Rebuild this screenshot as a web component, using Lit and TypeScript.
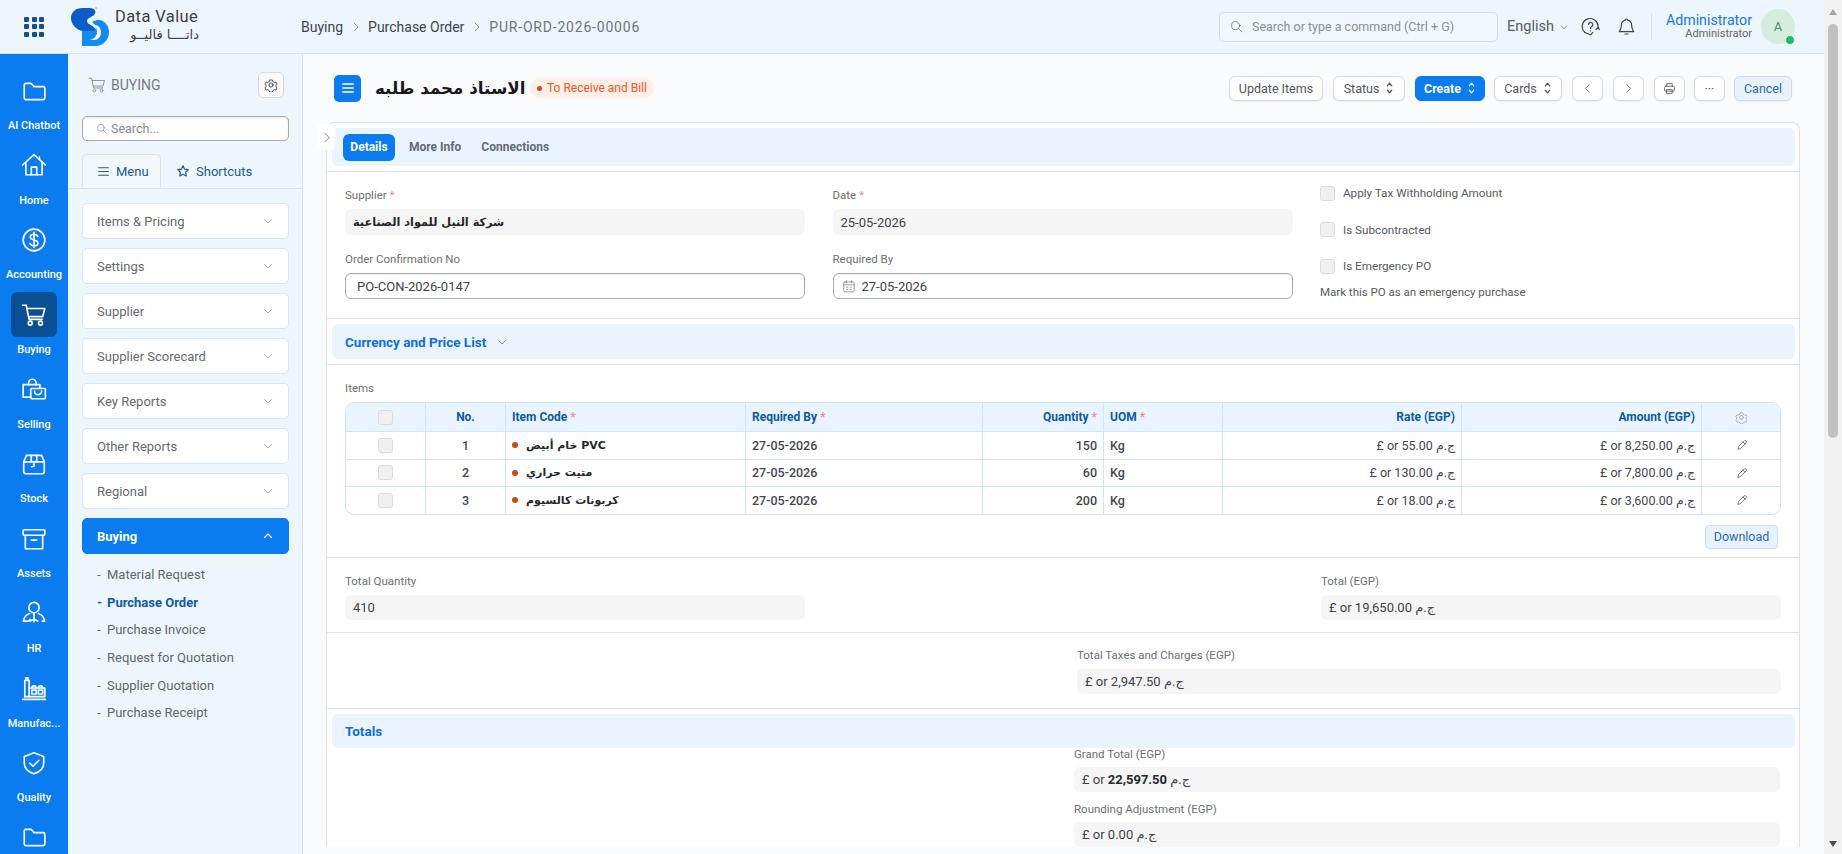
import { LitElement, html, css, svg } from 'lit';
import { customElement } from 'lit/decorators.js';

const railIcons: Record<string, unknown> = {
  folder: svg`<path d="M3 6.5A1.5 1.5 0 0 1 4.5 5h5l2.500 3h8.500A1.500 1.500 0 0 1 22 9.500v9a1.500 1.500 0 0 1-1.500 1.500h-16A1.500 1.500 0 0 1 3 18.500z"/>`,
  home: svg`<path d="M1.500 12 12 2.500 22.500 12"/><path d="M4.500 10v11h15V10"/><path d="M9.500 21v-7h5v7"/><path d="M17 4.500V7"/>`,
  dollar: svg`<circle cx="12" cy="12" r="10"/><path d="M15.500 8.700c-.6-1.300-1.900-2-3.500-2-2 0-3.500 1-3.500 2.600 0 3.600 7.200 1.800 7.200 5.400 0 1.600-1.600 2.600-3.700 2.600-1.700 0-3.100-.8-3.700-2.100"/><path d="M12 4.800v14.400"/>`,
  cart: svg`<path d="M1.500 3h3.300l2.700 13h12"/><path d="M5.400 6h16.600l-2 7.500H7"/><circle cx="8.500" cy="19.500" r="1.800"/><circle cx="18" cy="19.500" r="1.800"/>`,
  selling: svg`<path d="M7 8V6.500a3.500 3.500 0 0 1 7 0V8"/><path d="M9 19.500H2V8h15.500v3.500"/><rect x="9" y="11.500" width="13.500" height="9.500" rx="1"/><path d="M12.500 14a3.200 3.200 0 0 0 6.500 0"/>`,
  stock: svg`<path d="M2.500 10 5 4h14l2.500 6v9a2 2 0 0 1-2 2h-15a2 2 0 0 1-2-2z"/><path d="M2.500 10h19"/><path d="M9.500 4v6M14.500 4v6"/><path d="M12 10v4l-2 .5"/>`,
  assets: svg`<rect x="2" y="3.500" width="20" height="5" rx=".8"/><path d="M4 8.500V21h16V8.500"/><path d="M9.500 13h5"/>`,
  hr: svg`<circle cx="12" cy="7" r="4.800"/><path d="M8 12.500c-3 1-5.200 3.500-5.800 7h4.300c1 0 1.500-.8 2-1.700"/><path d="M16 12.500c3 1 5.200 3.500 5.800 7h-2.300"/><path d="M12 12v8"/><path d="M8.500 19.500c2-1.500 5-1.500 7 0"/>`,
  factory: svg`<path d="M1.500 22.500h21"/><path d="M3.500 20V5h4v15"/><path d="M4.500 5V2.500h2V5"/><path d="M7.500 12h14.500v8H3.500"/><rect x="10" y="14" width="4" height="3.500"/><rect x="16" y="14" width="4" height="3.500"/><path d="M10 12a2 2 0 0 1 4 0M16 12a2 2 0 0 1 4 0"/>`,
  quality: svg`<path d="M12 2.500 21 6v6c0 5-3.800 8.300-9 10-5.200-1.700-9-5-9-10V6z"/><path d="m8 12 3 3 5.500-5.500"/>`,
};

const rail = [
  { label: 'AI Chatbot', icon: 'folder' },
  { label: 'Home', icon: 'home' },
  { label: 'Accounting', icon: 'dollar' },
  { label: 'Buying', icon: 'cart', active: true },
  { label: 'Selling', icon: 'selling' },
  { label: 'Stock', icon: 'stock' },
  { label: 'Assets', icon: 'assets' },
  { label: 'HR', icon: 'hr' },
  { label: 'Manufac...', icon: 'factory' },
  { label: 'Quality', icon: 'quality' },
  { label: '', icon: 'folder' },
];

const accordions = ['Items & Pricing', 'Settings', 'Supplier', 'Supplier Scorecard', 'Key Reports', 'Other Reports', 'Regional'];
const subItems = ['Material Request', 'Purchase Order', 'Purchase Invoice', 'Request for Quotation', 'Supplier Quotation', 'Purchase Receipt'];
const rows = [
  { no: 1, code: 'خام أبيض PVC', qty: 150, rate: '55.00', amount: '8,250.00' },
  { no: 2, code: 'متيت حراري', qty: 60, rate: '130.00', amount: '7,800.00' },
  { no: 3, code: 'كربونات كالسيوم', qty: 200, rate: '18.00', amount: '3,600.00' },
];

const chevronDown = html`<svg class="chev" viewBox="0 0 24 24"><path d="m5 9 7 7 7-7"/></svg>`;
const updown = html`<svg class="updown" viewBox="0 0 10 16"><path d="m2.500 5.500 2.500-3 2.500 3M2.500 10.500l2.500 3 2.500-3"/></svg>`;
const gear = html`<svg class="gear" viewBox="0 0 24 24"><path d="M9.500 2.500h5l1 3 2.800 1.600 3-.7 2.200 4-2 2.100v3l2 2.100-2.200 4-3-.7-2.800 1.600-1 3h-5l-1-3-2.800-1.600-3 .7-2.200-4 2-2.100v-3l-2-2.100 2.200-4 3 .7 2.800-1.600z" transform="translate(1.200 1.200) scale(.9)"/><circle cx="12" cy="12" r="3.500"/></svg>`;
const searchIcon = html`<svg class="search-icon" viewBox="0 0 24 24"><circle cx="10.500" cy="10.500" r="7.500"/><path d="m16 16 6 6"/></svg>`;

@customElement('app-root')
export class AppRoot extends LitElement {
  static styles = css`
    :host {
      display: flex;
      width: 1842px;
      height: 854px;
      overflow: hidden;
      font-family: Roboto, "DejaVu Sans", sans-serif;
      font-size: 13px;
      color: #3a3f45;
      background: #fafbfd;
    }
    svg { fill: none; stroke: currentColor; stroke-width: 1.5; stroke-linecap: round; stroke-linejoin: round; display: block; flex: none; }
    .page { width: 1824px; height: 854px; display: flex; flex-direction: column; flex: none; }

    /* top bar */
    .topbar {
      height: 54px; box-sizing: border-box; flex: none; display: flex; align-items: center;
      background: #edf5fd; border-bottom: 1px solid #cfe3f8;
    }
    .apps { width: 20px; height: 20px; margin-left: 24px; display: grid; grid-template-columns: repeat(3, 5px); gap: 2.500px; }
    .apps i { background: #17508a; border-radius: 1px; }
    .logo { width: 38px; height: 40px; margin-left: 27px; stroke: none; }
    .brand { margin-left: 6px; width: 170px; color: #3c4149; line-height: 1; }
    .brand b { display: block; font-weight: 400; font-size: 16.500px; letter-spacing: .4px; height: 19px; }
    .brand span { display: block; font-size: 13px; font-family: "DejaVu Sans", sans-serif; height: 16px; width: 84px; direction: rtl; text-align: right; white-space: nowrap; }
    .crumbs { display: flex; align-items: center; font-size: 14px; color: #3f4650; margin-left: 16px; }
    .crumbs svg { width: 12px; height: 12px; margin: 0 6px 0 7px; color: #777; }
    .crumbs .doc { color: #70757c; letter-spacing: .8px; }
    .top-right { margin-left: auto; display: flex; align-items: center; padding-right: 29px; }
    .cmd {
      width: 279px; height: 30px; box-sizing: border-box; border: 1px solid #c9dff6; border-radius: 5px;
      display: flex; align-items: center; color: #8a8f96; font-size: 12.500px; background: #f1f7fd;
    }
    .cmd svg { width: 13px; height: 13px; margin: 0 9px 0 10px; color: #777; }
    .lang { margin-left: 9px; font-size: 14.500px; color: #555b63; display: flex; align-items: center; width: 74px; }
    .lang .chev { width: 10px; height: 10px; margin-left: 5px; }
    .ico { width: 19px; height: 19px; color: #444; }
    .bell { margin-left: 17px; }
    .divider { width: 1px; height: 27px; background: #d8e3ee; margin: 0 10px 0 15px; }
    .user { text-align: right; width: 90px; line-height: 13px; }
    .user b { display: block; font-weight: 400; color: #1878e6; font-size: 14.200px; }
    .user span { display: block; font-size: 11px; color: #666; }
    .avatar {
      width: 34px; height: 35px; border-radius: 50%; background: #d6ecdc; color: #4d8f63; margin-left: 9px;
      display: flex; align-items: center; justify-content: center; font-size: 13px; position: relative;
    }
    .avatar::after {
      content: ""; position: absolute; right: 0; bottom: -1px; width: 8px; height: 8px; border-radius: 50%;
      background: #1fb968; border: 1px solid #edf5fd;
    }

    .body { flex: 1; display: flex; min-height: 0; }

    /* rail */
    .rail { width: 68px; flex: none; background: #0a7cf0; padding-top: 14px; box-sizing: border-box; overflow: hidden; color: #fff; }
    .rail-item { height: 74.700px; display: flex; flex-direction: column; align-items: center; }
    .rail-icon { width: 46px; height: 45px; border-radius: 6px; display: flex; align-items: center; justify-content: center; }
    .rail-item.active .rail-icon { background: #0a4f95; }
    .rail-icon svg { width: 26px; height: 26px; }
    .rail-item span { font-size: 11px; font-weight: 500; margin-top: 6px; line-height: 14px; white-space: nowrap; }

    /* sidebar */
    .side {
      width: 235px; flex: none; box-sizing: border-box; background: #eef6fd;
      border-right: 1px solid #cfe3f8; display: flex; flex-direction: column; padding-top: 19px;
    }
    .side-head { display: flex; align-items: center; padding: 0 18px 0 20px; height: 24px; color: #777b80; font-size: 14px; }
    .side-head > svg { width: 18px; height: 18px; margin-right: 5px; color: #8a8d92; stroke-width: 1.200; }
    .gear-btn {
      margin-left: auto; width: 24px; height: 24px; border: 1px solid #d9d9d9; border-radius: 5px; background: #fafafa;
      display: flex; align-items: center; justify-content: center; color: #333;
    }
    .gear { width: 14px; height: 14px; }
    .side-search {
      margin: 19px 13px 0 14px; height: 25px; box-sizing: border-box; background: #fff; border: 1px solid #aaa; border-radius: 5px;
      display: flex; align-items: center; color: #8b8b8b; font-size: 12.500px; box-shadow: inset 0 1px 2px rgba(0,0,0,.1);
    }
    .side-search svg { width: 11px; height: 11px; margin: 0 4px 0 13px; color: #888; }
    .side-tabs { margin-top: 13px; height: 34px; border-bottom: 1px solid #dde3e8; display: flex; padding-left: 14px; }
    .side-tab {
      height: 34px; box-sizing: border-box; display: flex; align-items: center; color: #22598f; font-size: 13px;
      padding-left: 14px; width: 79px;
    }
    .side-tab.on { background: #f2f7fc; border: 1px solid #dde3e8; border-bottom: 1px solid #f2f7fc; border-radius: 5px 5px 0 0; }
    .side-tab svg { width: 13px; height: 13px; margin-right: 6px; }
    .side-tab + .side-tab { margin-left: 15px; padding-left: 0; width: 90px; }
    .side-tab + .side-tab svg { width: 14px; height: 14px; }
    .accs { margin: 14px 13px 0 14px; display: flex; flex-direction: column; gap: 9px; }
    .acc {
      height: 36px; box-sizing: border-box; background: #fff; border: 1px solid #d5e7fa; border-radius: 5px;
      display: flex; align-items: center; justify-content: space-between; padding: 0 14px; color: #666a6f; font-size: 13px;
    }
    .acc .chev { width: 12px; height: 12px; color: #85898e; }
    .acc.open { background: #0a7cf0; border-color: #0a7cf0; color: #fff; font-weight: 700; }
    .acc.open .chev { color: #fff; stroke-width: 2.500; transform: scaleY(-1); }
    .subs { margin: 7px 0 0 29px; display: flex; flex-direction: column; }
    .sub { height: 27.600px; display: flex; align-items: center; color: #62666b; font-size: 13px; }
    .sub i { font-style: normal; width: 10px; }
    .sub.on { color: #0f5aa6; font-weight: 700; }

    /* main */
    .main { flex: 1; min-width: 0; background: #fafbfd; overflow: hidden; }
    .head { height: 68px; box-sizing: border-box; display: flex; align-items: center; padding: 0 32px 0 31px; }
    .menu-btn { width: 27px; height: 27px; border-radius: 5px; background: #0a7cf0; color: #fff; display: flex; align-items: center; justify-content: center; }
    .menu-btn svg { width: 16px; height: 16px; stroke-width: 2; }
    .title { font-family: "DejaVu Sans", sans-serif; font-weight: 700; font-size: 16.700px; margin-left: 14px; width: 148px; white-space: nowrap; color: #16181b; text-align: center; }
    .pill {
      margin-left: 7px; height: 20px; padding: 0 7px; border-radius: 10px; background: #fdeee6; color: #e2592f; font-size: 12px;
      display: flex; align-items: center;
    }
    .pill i { width: 5px; height: 5px; background: #d6481c; border-radius: 50%; margin-right: 5px; }
    .actions { margin-left: auto; display: flex; }
    .btn {
      height: 25px; box-sizing: border-box; border: 1px solid #d8dadd; border-radius: 6px; background: #fff; color: #50555c;
      font-size: 12.500px; display: flex; align-items: center; justify-content: center; gap: 6px; margin-left: 10px;
      box-shadow: 0 1px 2px rgba(0,0,0,.05);
    }
    .btn .updown { width: 9px; height: 14px; }
    .btn.primary { background: #0a7cf0; border-color: #0a7cf0; color: #fff; font-weight: 700; }
    .btn.cancel { background: #e7f2fd; border-color: #d0dbe6; color: #2a6caf; }
    .btn.square { width: 31px; }
    .btn.square svg { width: 13px; height: 13px; }
    .btn.tight { margin-left: 9px; }

    .card {
      margin: 0 24px 0 23px; background: #fff; border: 1px solid #dfe1e4; border-bottom: 0; border-radius: 8px 8px 0 0;
      position: relative; padding-top: 5px;
    }
    .handle {
      position: absolute; left: -10px; top: 1px; width: 18px; height: 26px; background: #fff; border-radius: 4px;
      display: flex; align-items: center; justify-content: center; color: #666;
    }
    .handle svg { width: 13px; height: 13px; }
    .strip { margin: 0 4px 0 5px; background: #eaf4fe; border-radius: 6px; }
    .tabs { height: 38px; display: flex; align-items: center; padding-left: 11px; }
    .tab { font-size: 12px; font-weight: 700; color: #656b74; padding: 0 10px; height: 27px; display: flex; align-items: center; }
    .tab.on { background: #0a7cf0; color: #fff; border-radius: 6px; padding: 0; width: 52px; justify-content: center; margin-right: 4px; }
    .sec { border-top: 1px solid #e1e3e6; margin-top: 5px; padding: 0 18px; }
    .strip.fold { height: 35px; margin-top: 5px; display: flex; align-items: center; padding-left: 13px; color: #0f6fdc; font-weight: 700; font-size: 13.500px; }
    .strip.fold .chev { width: 12px; height: 12px; margin-left: 10px; color: #667; }
    .rule { border-top: 1px solid #e1e3e6; }

    .top-grid { display: grid; grid-template-columns: repeat(3, 460px); column-gap: 27.500px; padding-top: 16px; height: 130px; }
    .col { display: flex; flex-direction: column; gap: 17px; }
    .field label, .lbl { display: block; height: 14px; line-height: 14px; font-size: 11.500px; color: #6b7075; margin-bottom: 7px; }
    .field label em { color: #ec8a8d; font-style: normal; }
    .val {
      height: 26px; box-sizing: border-box; background: #f5f5f6; border-radius: 6px; display: flex; align-items: center;
      padding: 0 8px; font-size: 13px; color: #3e4349;
    }
    .val.ar { font-family: "DejaVu Sans", sans-serif; font-weight: 700; font-size: 11.300px; color: #25282c; }
    .val.edit { background: #fff; border: 1px solid #a9adb2; padding: 0 11px; box-shadow: inset 0 1px 1px rgba(0,0,0,.06); }
    .val.edit.date { padding-left: 8px; }
    .val.edit svg { width: 14px; height: 14px; margin-right: 6px; color: #777; stroke-width: 1.200; }
    .val b { font-weight: 700; color: #25282c; }
    .checks { display: flex; flex-direction: column; margin-top: -13px; }
    .check { display: flex; align-items: center; height: 36.500px; font-size: 11.700px; color: #555a60; }
    .box { width: 15px; height: 15px; box-sizing: border-box; background: #f0f0f1; border: 1px solid #dcdcdd; border-radius: 3px; flex: none; }
    .check .box { margin-right: 8px; }
    .hint { font-size: 11.500px; color: #565b61; line-height: 14px; }

    .items { padding-top: 16px; height: 193px; box-sizing: border-box; }
    .items .lbl { margin-bottom: 7px; }
    .table { border: 1px solid #cfe5fb; border-radius: 9px; overflow: hidden; width: 1436px; box-sizing: border-box; }
    .tr { display: grid; grid-template-columns: 80px 80px 240px 237px 121px 119px 239px 240px 79px; height: 27.500px; border-top: 1px solid #cfe5fb; box-sizing: border-box; align-items: stretch; }
    .tr.th { background: #eaf4fe; border-top: 0; height: 28px; }
    .tr > div { border-right: 1px solid #cfe5fb; display: flex; align-items: center; padding: 0 6px; min-width: 0; white-space: nowrap; font-size: 12.500px; font-weight: 500; color: #43484e; }
    .tr.th > div { color: #0b5aa5; font-size: 12px; font-weight: 700; }
    .tr > div:last-child { border-right: 0; }
    .tr em { color: #ef8d90; font-style: normal; margin-left: 3px; }
    .tr > .c { justify-content: center; }
    .tr > .r { justify-content: flex-end; }
    .tr > .money { font-weight: 400; }
    .tr > .code { font-family: "DejaVu Sans", sans-serif; font-weight: 700; font-size: 11px; color: #25282c; }
    .code i { width: 6px; height: 6px; border-radius: 50%; background: #cc4a12; margin-right: 8px; flex: none; }
    .tr .pencil { width: 12px; height: 12px; color: #555; }
    .tr .gear { width: 13px; height: 13px; color: #999; }
    .dl { display: flex; justify-content: flex-end; margin-top: 10px; padding-right: 3px; }
    .dl div {
      width: 73px; height: 24px; box-sizing: border-box; background: #e7f2fd; border: 1px solid #c6e0fa; border-radius: 4px;
      display: flex; align-items: center; justify-content: center; font-size: 12.500px; color: #2a6caf;
    }
    .two { display: grid; grid-template-columns: 460px 460px 460px; column-gap: 28px; padding-top: 16px; height: 75px; box-sizing: border-box; margin-top: 0; }
    .half { display: grid; grid-template-columns: 704px 704px; column-gap: 28px; padding-top: 15px; height: 76px; box-sizing: border-box; margin-top: 0; }
    .half .val, .two .val, .after .val { height: 25px; }
    .after { margin: -1px 0 0 729px; width: 706px; }
    .after label { margin-bottom: 6px; }
    .after .field + .field { margin-top: 10px; }
    .scroll { width: 18px; flex: none; background: #f1f1f1; position: relative; }
    .thumb { position: absolute; left: 4px; top: 24px; width: 10px; height: 414px; background: #c1c1c1; border-radius: 5px; }
    .scroll i { position: absolute; left: 5px; width: 0; height: 0; border-left: 4px solid transparent; border-right: 4px solid transparent; }
    .scroll .up { top: 9px; border-bottom: 6px solid #a3a3a3; }
    .scroll .down { bottom: 7px; border-top: 6px solid #505050; }
  `;

  private _field(label: string, value: unknown, req = false, cls = '') {
    return html`<div class="field"><label>${label}${req ? html` <em>*</em>` : ''}</label><div class="val ${cls}">${value}</div></div>`;
  }

  private _money(v: string, bold = false) {
    return html`<span>£ or ${bold ? html`<b>${v}</b>` : v} ج.م</span>`;
  }

  render() {
    return html`
      <div class="page">
        <header class="topbar">
          <div class="apps">${Array.from({ length: 9 }, () => html`<i></i>`)}</div>
          <svg class="logo" viewBox="0 0 38 40">
            <path fill="#0a5cc8" d="M0 11C0 5 5 1 11 1h8c5 0 7 4 4 7-2 2-7 3-7 6 0 4 8 4 9 10H12C5 23 0 17 0 11z"/>
            <path fill="#148af5" d="M11 24h8c3 0 6-1 6-4 0-2-2-3-4-5 2-1 4-2 6-2 7 0 11 6 11 12 0 8-6 14-14 14H11z"/>
            <path fill="#fff" d="M24 18c3 0 6 3 6 7 0 5-3 8-7 8h-4c4-1 7-4 7-8 0-3-1-5-2-7z"/>
            <circle cx="25" cy="1" r=".8" fill="#5ab2fa"/>
          </svg>
          <div class="brand"><b>Data Value</b><span>داتــــا فاليــو</span></div>
          <nav class="crumbs">
            <span>Buying</span><svg viewBox="0 0 24 24"><path d="m8 4 8 8-8 8"/></svg>
            <span>Purchase Order</span><svg viewBox="0 0 24 24"><path d="m8 4 8 8-8 8"/></svg>
            <span class="doc">PUR-ORD-2026-00006</span>
          </nav>
          <div class="top-right">
            <div class="cmd">${searchIcon}Search or type a command (Ctrl + G)</div>
            <div class="lang">English ${chevronDown}</div>
            <svg class="ico" viewBox="0 0 24 24"><path d="M5 19.500A10 10 0 1 1 21.500 13"/><path d="M9.500 9.500a2.700 2.700 0 1 1 4 2.400c-1 .6-1.500 1.200-1.500 2.600"/><path d="M12 17.500v.2"/><path d="m5 19.500 7 3 3-3"/><path d="m19 16 3-3 1 3"/></svg>
            <svg class="ico bell" viewBox="0 0 24 24"><path d="M12 2.500a1.500 1.500 0 0 0-1.500 1.500 6.500 6.500 0 0 0-5 6.500c0 5-2 6.500-2.500 8h18c-.5-1.500-2.500-3-2.500-8a6.500 6.500 0 0 0-5-6.500A1.500 1.500 0 0 0 12 2.500z"/><path d="M10 21.500h4"/></svg>
            <div class="divider"></div>
            <div class="user"><b>Administrator</b><span>Administrator</span></div>
            <div class="avatar">A</div>
          </div>
        </header>
        <div class="body">
          <aside class="rail">
            ${rail.map(r => html`
              <div class="rail-item ${r.active ? 'active' : ''}">
                <div class="rail-icon"><svg viewBox="0 0 24 24">${railIcons[r.icon]}</svg></div>
                <span>${r.label}</span>
              </div>`)}
          </aside>
          <aside class="side">
            <div class="side-head">
              <svg viewBox="0 0 24 24">${railIcons.cart}</svg>BUYING
              <div class="gear-btn">${gear}</div>
            </div>
            <div class="side-search">${searchIcon}Search...</div>
            <div class="side-tabs">
              <div class="side-tab on"><svg viewBox="0 0 24 24" style="stroke-width:2"><path d="M3 5h18M3 12h18M3 19h18"/></svg>Menu</div>
              <div class="side-tab"><svg viewBox="0 0 24 24" style="stroke-width:2"><path d="m12 3 2.800 5.800 6.200.9-4.500 4.400 1.100 6.300-5.600-3-5.600 3 1.100-6.300L3 9.700l6.200-.9z"/></svg>Shortcuts</div>
            </div>
            <div class="accs">
              ${accordions.map(a => html`<div class="acc">${a}${chevronDown}</div>`)}
              <div class="acc open">Buying${chevronDown}</div>
            </div>
            <div class="subs">
              ${subItems.map(s => html`<div class="sub ${s === 'Purchase Order' ? 'on' : ''}"><i>-</i>${s}</div>`)}
            </div>
          </aside>
          <main class="main">
            <div class="head">
              <div class="menu-btn"><svg viewBox="0 0 24 24"><path d="M4 6h16M4 12h16M4 18h16"/></svg></div>
              <div class="title">الاستاذ محمد طلبه</div>
              <div class="pill"><i></i>To Receive and Bill</div>
              <div class="actions">
                <div class="btn" style="width:94px">Update Items</div>
                <div class="btn" style="width:72px">Status ${updown}</div>
                <div class="btn primary" style="width:70px">Create ${updown}</div>
                <div class="btn tight" style="width:68px">Cards ${updown}</div>
                <div class="btn square"><svg viewBox="0 0 24 24"><path d="m15 5-7 7 7 7"/></svg></div>
                <div class="btn square"><svg viewBox="0 0 24 24"><path d="m9 5 7 7-7 7"/></svg></div>
                <div class="btn square"><svg viewBox="0 0 24 24"><path d="M7 8V3h10v5"/><rect x="3" y="8" width="18" height="9" rx="2"/><path d="M7 14h10v7H7z"/></svg></div>
                <div class="btn square tight">···</div>
                <div class="btn cancel tight" style="width:58px">Cancel</div>
              </div>
            </div>
            <section class="card">
              <div class="handle"><svg viewBox="0 0 24 24"><path d="m9 4 8 8-8 8"/></svg></div>
              <div class="strip tabs">
                <div class="tab on">Details</div><div class="tab">More Info</div><div class="tab">Connections</div>
              </div>
              <div class="sec">
                <div class="top-grid">
                  <div class="col">
                    ${this._field('Supplier', 'شركة النيل للمواد الصناعية', true, 'ar')}
                    ${this._field('Order Confirmation No', 'PO-CON-2026-0147', false, 'edit')}
                  </div>
                  <div class="col">
                    ${this._field('Date', '25-05-2026', true)}
                    ${this._field('Required By', html`<svg viewBox="0 0 24 24"><rect x="3" y="5" width="18" height="17" rx="2"/><path d="M3 10h18M8 2.500V7M16 2.500V7M8 14h2M14 14h2M8 18h2M14 18h2"/></svg>27-05-2026`, false, 'edit date')}
                  </div>
                  <div class="checks">
                    <div class="check"><span class="box"></span>Apply Tax Withholding Amount</div>
                    <div class="check"><span class="box"></span>Is Subcontracted</div>
                    <div class="check"><span class="box"></span>Is Emergency PO</div>
                    <div class="hint">Mark this PO as an emergency purchase</div>
                  </div>
                </div>
              </div>
              <div class="rule"></div>
              <div class="strip fold">Currency and Price List ${chevronDown}</div>
              <div class="sec items">
                <div class="lbl">Items</div>
                <div class="table">
                  <div class="tr th">
                    <div class="c"><span class="box"></span></div><div class="c">No.</div><div>Item Code <em>*</em></div><div>Required By <em>*</em></div>
                    <div class="r">Quantity <em>*</em></div><div>UOM <em>*</em></div><div class="r">Rate (EGP)</div><div class="r">Amount (EGP)</div><div class="c">${gear}</div>
                  </div>
                  ${rows.map(r => html`
                    <div class="tr">
                      <div class="c"><span class="box"></span></div><div class="c">${r.no}</div>
                      <div class="code"><i></i>${r.code}</div><div>27-05-2026</div>
                      <div class="r">${r.qty}</div><div>Kg</div>
                      <div class="r money">${this._money(r.rate)}</div><div class="r money">${this._money(r.amount)}</div>
                      <div class="c"><svg class="pencil" viewBox="0 0 24 24"><path d="M4 20l1-5L16 4c1-1 3-1 4 0s1 3 0 4L9 19z"/><path d="m14 6 4 4"/></svg></div>
                    </div>`)}
                </div>
                <div class="dl"><div>Download</div></div>
              </div>
              <div class="sec two">
                ${this._field('Total Quantity', '410')}
                <div></div>
                ${this._field('Total (EGP)', this._money('19,650.00'))}
              </div>
              <div class="sec half">
                <div></div>
                ${this._field('Total Taxes and Charges (EGP)', this._money('2,947.50'))}
              </div>
              <div class="rule"></div>
              <div class="strip fold" style="height:34px">Totals</div>
              <div class="sec" style="border-top:0;margin-top:0">
                <div class="after">
                  ${this._field('Grand Total (EGP)', this._money('22,597.50', true))}
                  ${this._field('Rounding Adjustment (EGP)', this._money('0.00'))}
                </div>
              </div>
            </section>
          </main>
        </div>
      </div>
      <div class="scroll"><i class="up"></i><div class="thumb"></div><i class="down"></i></div>
    `;
  }
}
